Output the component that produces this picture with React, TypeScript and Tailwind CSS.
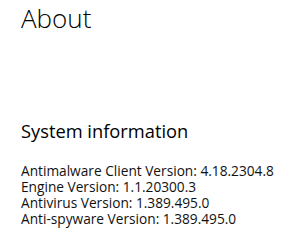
export default function App() {
  return (
    <div
      className="w-[288px] h-[250px] bg-white text-black overflow-hidden pl-[21px]"
      style={{ fontFamily: '"Open Sans", "Noto Sans", sans-serif' }}
    >
      <h1 className="text-[26px] font-light leading-[36px]">About</h1>
      <h2 className="text-[18.3px] font-normal leading-[26px] mt-[82px]">System information</h2>
      <div className="mt-[19px] text-[13.7px] leading-[16px] text-[#111]">
        <div>Antimalware Client Version: 4.18.2304.8</div>
        <div>Engine Version: 1.1.20300.3</div>
        <div>Antivirus Version: 1.389.495.0</div>
        <div>Anti-spyware Version: 1.389.495.0</div>
      </div>
    </div>
  );
}
